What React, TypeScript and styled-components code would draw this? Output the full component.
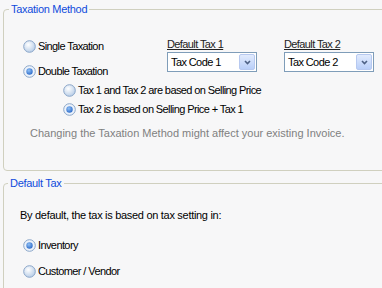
import React, { FC } from "react";
import styled, { createGlobalStyle } from "styled-components";

const GlobalStyle = createGlobalStyle`
  html, body {
    margin: 0;
    padding: 0;
    background: #f7f7f8;
    overflow: hidden;
  }
  body {
    font-family: "Liberation Sans", Arial, sans-serif;
    font-size: 11px;
    letter-spacing: -0.6px;
    color: #000;
  }
`;

const Page = styled.div`
  width: 382px;
  height: 288px;
  overflow: hidden;
  box-sizing: border-box;
  padding: 3px 0 0 3px;
  display: flex;
  flex-direction: column;
  gap: 6px;
`;

const Group = styled.fieldset<{ $height: number }>`
  margin: 0;
  padding: 0;
  min-width: 0;
  width: 420px;
  height: ${({ $height }) => $height}px;
  box-sizing: border-box;
  border: 1px solid #d0d0bf;
  border-radius: 4px;
  flex-shrink: 0;
`;

const Legend = styled.legend<{ $left: number }>`
  color: #0f4bdc;
  line-height: 13px;
  letter-spacing: -0.3px;
  padding: 0 2px;
  margin-left: ${({ $left }) => $left}px;
`;

const TopRow = styled.div`
  display: flex;
  padding-top: 22px;
`;

const RadioColumn = styled.div`
  width: 144px;
  padding-left: 19px;
  display: flex;
  flex-direction: column;
  gap: 9px;
`;

const TaxColumn = styled.div`
  width: 117px;
  display: flex;
  flex-direction: column;
  gap: 1px;
`;

const TaxLabel = styled.div`
  line-height: 13px;
  text-decoration: underline;
  color: #222;
`;

const RadioRow = styled.label`
  display: flex;
  align-items: center;
  gap: 2px;
  height: 16px;
  line-height: 16px;
  white-space: nowrap;
`;

const SubOptions = styled.div`
  display: flex;
  flex-direction: column;
  gap: 3px;
  padding: 3px 0 0 59px;
`;

const Note = styled.div`
  color: #808080;
  line-height: 13px;
  letter-spacing: 0;
  padding: 10px 0 0 26px;
  white-space: nowrap;
`;

const Intro = styled.div`
  line-height: 13px;
  letter-spacing: -0.3px;
  padding: 19px 0 0 16px;
`;

const DefaultOptions = styled.div`
  display: flex;
  flex-direction: column;
  gap: 10px;
  padding: 15px 0 0 19px;
`;

const Select = styled.div`
  width: 90px;
  height: 20px;
  box-sizing: border-box;
  border: 1px solid #7f9db9;
  background: #fff;
  display: flex;
  align-items: center;
  justify-content: space-between;
  padding: 0 1px 0 3px;
`;

const DropButton = styled.div`
  width: 16px;
  height: 16px;
  box-sizing: border-box;
  border: 1px solid #b7c9f0;
  border-radius: 2px;
  background: linear-gradient(#e2ebfd, #b9cff9);
  display: flex;
  align-items: center;
  justify-content: center;
`;

const Radio: FC<{ checked?: boolean }> = ({ checked }) => (
  <svg width="13" height="13" viewBox="0 0 13 13">
    <defs>
      <radialGradient id="rf" cx="0.4" cy="0.35" r="0.7">
        <stop offset="0" stopColor="#ffffff" />
        <stop offset="1" stopColor="#b5cbe6" />
      </radialGradient>
      <radialGradient id="rd" cx="0.4" cy="0.35" r="0.7">
        <stop offset="0" stopColor="#8fc0f5" />
        <stop offset="1" stopColor="#2a68c8" />
      </radialGradient>
    </defs>
    <circle cx="6.5" cy="6.5" r="5.8" fill={checked ? "#edf3fb" : "url(#rf)"} stroke="#8aa6c9" strokeWidth="1" />
    {checked && <circle cx="6.5" cy="6.5" r="3.2" fill="url(#rd)" />}
  </svg>
);

const Chevron = () => (
  <svg width="7" height="5" viewBox="0 0 7 5">
    <polyline points="1 1 3.5 3.5 6 1" fill="none" stroke="#4d6185" strokeWidth="1.6" />
  </svg>
);

const Option: FC<{ text: string; checked?: boolean }> = ({ text, checked }) => (
  <RadioRow>
    <Radio checked={checked} />
    <span>{text}</span>
  </RadioRow>
);

const TaxPicker: FC<{ label: string; value: string }> = ({ label, value }) => (
  <TaxColumn>
    <TaxLabel>{label}</TaxLabel>
    <Select>
      <span>{value}</span>
      <DropButton>
        <Chevron />
      </DropButton>
    </Select>
  </TaxColumn>
);

export default function App() {
  return (
    <>
      <GlobalStyle />
      <Page>
        <Group $height={168}>
          <Legend $left={5}>Taxation Method</Legend>
          <TopRow>
            <RadioColumn>
              <Option text="Single Taxation" />
              <Option text="Double Taxation" checked />
            </RadioColumn>
            <TaxPicker label="Default Tax 1" value="Tax Code 1" />
            <TaxPicker label="Default Tax 2" value="Tax Code 2" />
          </TopRow>
          <SubOptions>
            <Option text="Tax 1 and Tax 2 are based on Selling Price" />
            <Option text="Tax 2 is based on Selling Price + Tax 1" checked />
          </SubOptions>
          <Note>Changing the Taxation Method might affect your existing Invoice.</Note>
        </Group>
        <Group $height={160}>
          <Legend $left={4}>Default Tax</Legend>
          <Intro>By default, the tax is based on tax setting in:</Intro>
          <DefaultOptions>
            <Option text="Inventory" checked />
            <Option text="Customer / Vendor" />
          </DefaultOptions>
        </Group>
      </Page>
    </>
  );
}
